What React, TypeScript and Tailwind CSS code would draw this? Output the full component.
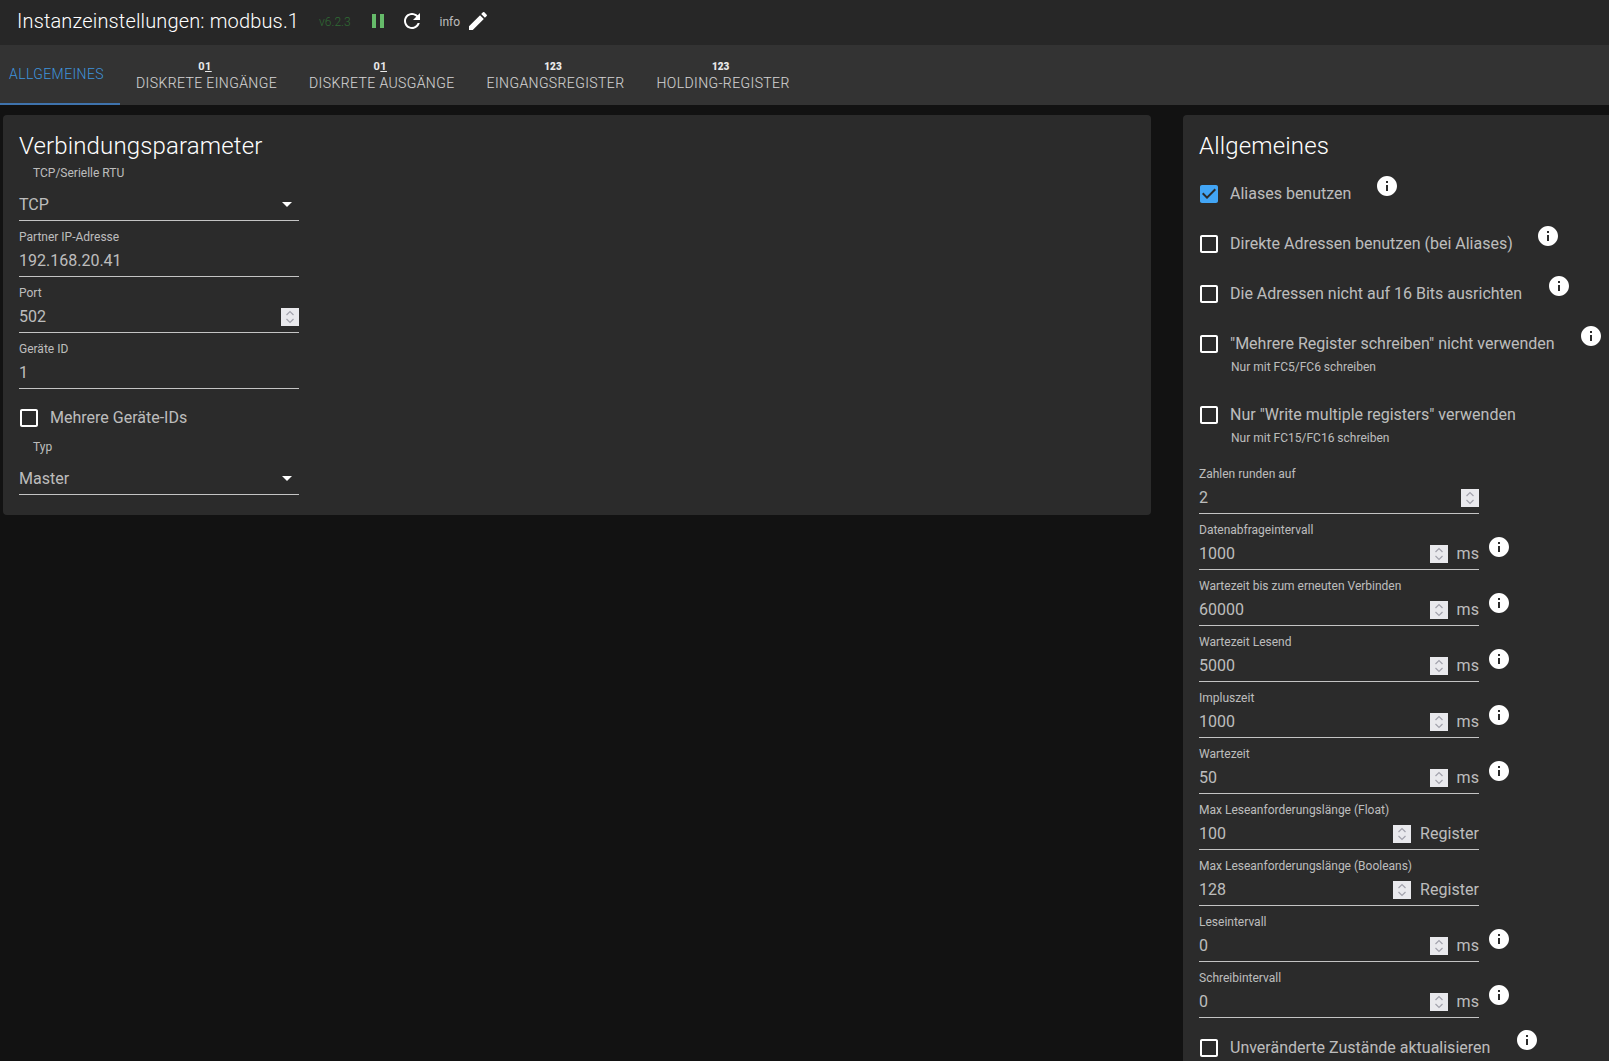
import type { ReactNode } from 'react'

const TABS = [
  { label: 'Diskrete Eingänge', icon: 'bit' },
  { label: 'Diskrete Ausgänge', icon: 'bit' },
  { label: 'Eingangsregister', icon: 'num' },
  { label: 'Holding-Register', icon: 'num' },
]

const TIMINGS_A = [
  { label: 'Datenabfrageintervall', value: '1000', unit: 'ms', info: true },
  { label: 'Wartezeit bis zum erneuten Verbinden', value: '60000', unit: 'ms', info: true },
  { label: 'Wartezeit Lesend', value: '5000', unit: 'ms', info: true },
  { label: 'Impluszeit', value: '1000', unit: 'ms', info: true },
  { label: 'Wartezeit', value: '50', unit: 'ms', info: true },
  { label: 'Max Leseanforderungslänge (Float)', value: '100', unit: 'Register', info: false },
  { label: 'Max Leseanforderungslänge (Booleans)', value: '128', unit: 'Register', info: false },
  { label: 'Leseintervall', value: '0', unit: 'ms', info: true },
  { label: 'Schreibintervall', value: '0', unit: 'ms', info: true },
]

function Icon({ d, className }: { d: string; className: string }) {
  return (
    <svg viewBox="0 0 24 24" className={className} fill="currentColor">
      <path d={d} />
    </svg>
  )
}

function InfoIcon({ className = '' }: { className?: string }) {
  return (
    <Icon
      className={`w-6 h-6 shrink-0 text-white ${className}`}
      d="M12 2C6.48 2 2 6.48 2 12s4.48 10 10 10 10-4.48 10-10S17.52 2 12 2zm1 15h-2v-6h2v6zm0-8h-2V7h2v2z"
    />
  )
}

function Spinner() {
  return (
    <span className="w-[18px] h-[18px] mb-[6px] shrink-0 bg-[#e9e9ed] flex items-center justify-center">
      <svg viewBox="0 0 18 18" className="w-[18px] h-[18px]" fill="none" stroke="#a3a3ad" strokeWidth="1.2">
        <path d="M5.5 7L9 3.5 12.5 7" />
        <path d="M5.5 11L9 14.5 12.5 11" />
      </svg>
    </span>
  )
}

function Field({ label, value, unit, spin }: { label: string; value: string; unit?: string; spin?: boolean }) {
  return (
    <div className="w-[280px] h-14 flex flex-col justify-end shrink-0">
      <div className="text-xs leading-4 text-white/70">{label}</div>
      <div className="h-[31px] mt-px flex items-end border-b border-[#c4c4c4] text-white/70">
        <span className="flex-1 text-base leading-[29px] h-[30px]">{value}</span>
        {spin && <Spinner />}
        {unit && <span className="ml-[9px] text-base tracking-[0.05px] leading-[30px] h-[30px] text-white/70">{unit}</span>}
      </div>
    </div>
  )
}

function SelectField({ label, value, height }: { label: string; value: string; height: string }) {
  return (
    <div className={`w-[280px] flex flex-col justify-end ${height}`}>
      <div className="text-xs leading-4 pl-3.5 text-white/70">{label}</div>
      <div className="h-[32px] mt-[8px] flex items-center justify-between border-b border-[#c4c4c4] text-white/70">
        <span className="text-base">{value}</span>
        <span className="mr-[7px] w-0 h-0 border-x-[5px] border-x-transparent border-t-[5px] border-t-white" />
      </div>
    </div>
  )
}

function CheckRow({ label, checked, infoGap, children, className = 'mb-2' }: { label: string; checked?: boolean; infoGap?: string; children?: ReactNode; className?: string }) {
  return (
    <div className={className}>
      <div className="flex items-start h-[42px]">
        <span className="w-[42px] h-[42px] -ml-[11px] shrink-0 flex items-center justify-center">
          {checked ? (
            <Icon
              className="w-6 h-6 text-[#42a5f5]"
              d="M19 3H5c-1.11 0-2 .9-2 2v14c0 1.1.89 2 2 2h14c1.11 0 2-.9 2-2V5c0-1.1-.89-2-2-2zm-9 14l-5-5 1.41-1.41L10 14.17l7.59-7.59L19 8l-9 9z"
            />
          ) : (
            <Icon
              className="w-6 h-6 text-white"
              d="M19 5v14H5V5h14m0-2H5c-1.1 0-2 .9-2 2v14c0 1.1.9 2 2 2h14c1.1 0 2-.9 2-2V5c0-1.1-.9-2-2-2z"
            />
          )}
        </span>
        <span className="text-base leading-[42px] text-white/70 whitespace-nowrap">{label}</span>
        {infoGap && <InfoIcon className={`mt-px ${infoGap}`} />}
      </div>
      {children}
    </div>
  )
}

function SubText({ children }: { children: ReactNode }) {
  return <div className="-mt-[6px] pl-[32px] text-xs leading-4 text-white/70">{children}</div>
}

function TabIcon({ kind }: { kind: string }) {
  if (kind === 'bit') {
    return (
      <span className="mr-[3px] text-[11px] leading-4 font-bold text-white/90">
        0<span className="underline">1</span>
      </span>
    )
  }
  return <span className="mr-[5px] text-[10px] leading-4 font-black tracking-normal text-white/90">123</span>
}

export default function App() {
  return (
    <div className="h-screen overflow-hidden flex flex-col bg-[#121212] [font-family:Roboto,sans-serif]">
      <header className="h-[45px] shrink-0 flex items-center pl-[17px] pb-[3px] bg-[#272727]">
        <h1 className="text-xl font-light tracking-[0.15px] text-white whitespace-nowrap">Instanzeinstellungen: modbus.1</h1>
        <span className="ml-[20px] mt-0.5 text-xs font-light text-[#2f6b34]">v6.2.3</span>
        <Icon className="ml-[15px] w-6 h-6 text-[#66bb6a]" d="M6 19h4V5H6v14zm8-14v14h4V5h-4z" />
        <Icon
          className="ml-[10px] w-6 h-6 text-white"
          d="M17.65 6.35C16.2 4.9 14.21 4 12 4c-4.42 0-7.99 3.58-7.99 8s3.57 8 7.99 8c3.73 0 6.84-2.55 7.73-6h-2.08c-.82 2.33-3.04 4-5.65 4-3.31 0-6-2.69-6-6s2.69-6 6-6c1.66 0 3.14.69 4.22 1.78L13 11h7V4l-2.35 2.35z"
        />
        <span className="ml-[16px] mt-0.5 text-xs text-white/70">info</span>
        <Icon
          className="ml-[6px] w-6 h-6 text-white"
          d="M3 17.25V21h3.75L17.81 9.94l-3.75-3.75L3 17.25zM20.71 7.04c.39-.39.39-1.02 0-1.41l-2.34-2.34a.9959.9959 0 0 0-1.41 0l-1.83 1.83 3.75 3.75 1.83-1.83z"
        />
      </header>

      <nav className="h-[60px] shrink-0 flex bg-[#333333] text-sm uppercase tracking-[0.4px]">
        <div className="w-[120px] pl-[9px] flex items-center border-b-2 border-[#3f73ad] text-[#3f94dc] font-light">Allgemeines</div>
        {TABS.map((tab) => (
          <div key={tab.label} className="px-4 flex flex-col items-center justify-center text-white/80 font-light whitespace-nowrap">
            <TabIcon kind={tab.icon} />
            <span className="leading-4">{tab.label}</span>
          </div>
        ))}
      </nav>

      <main className="flex-1 min-h-0 flex items-start gap-8 pt-[10px] pl-[3px]">
        <section className="w-[1148px] h-[400px] shrink-0 rounded bg-[#2b2b2b] px-4 pt-4">
          <h2 className="text-2xl h-8 leading-[30px] tracking-[0.15px] font-light text-white">Verbindungsparameter</h2>
          <SelectField label="TCP/Serielle RTU" value="TCP" height="h-[58px]" />
          <Field label="Partner IP-Adresse" value="192.168.20.41" />
          <Field label="Port" value="502" spin />
          <Field label="Geräte ID" value="1" />
          <div className="mt-[8px]">
            <CheckRow label="Mehrere Geräte-IDs" className="mb-0" />
          </div>
          <SelectField label="Typ" value="Master" height="h-[56px]" />
        </section>

        <section className="flex-1 rounded bg-[#2b2b2b] px-4 pt-4 pb-4 h-[1000px]">
          <h2 className="text-2xl h-8 leading-[30px] tracking-[0.15px] font-light text-white mb-2.5">Allgemeines</h2>
          <CheckRow label="Aliases benutzen" checked infoGap="ml-6" />
          <CheckRow label="Direkte Adressen benutzen (bei Aliases)" infoGap="ml-[23px]" />
          <CheckRow label="Die Adressen nicht auf 16 Bits ausrichten" infoGap="ml-[25px]" />
          <CheckRow label={'"Mehrere Register schreiben" nicht verwenden'} infoGap="ml-6" className="mb-[19px]">
            <SubText>Nur mit FC5/FC6 schreiben</SubText>
          </CheckRow>
          <CheckRow label={'Nur "Write multiple registers" verwenden'} className="mb-[12px]">
            <SubText>Nur mit FC15/FC16 schreiben</SubText>
          </CheckRow>
          <Field label="Zahlen runden auf" value="2" spin />
          {TIMINGS_A.map((f) => (
            <div key={f.label} className="flex items-end">
              <Field label={f.label} value={f.value} unit={f.unit} spin />
              {f.info && <InfoIcon className="ml-2 mb-[11px]" />}
            </div>
          ))}
          <div className="mt-[9px]">
            <CheckRow label="Unveränderte Zustände aktualisieren" infoGap="ml-[25px]" />
          </div>
        </section>
      </main>
    </div>
  )
}
